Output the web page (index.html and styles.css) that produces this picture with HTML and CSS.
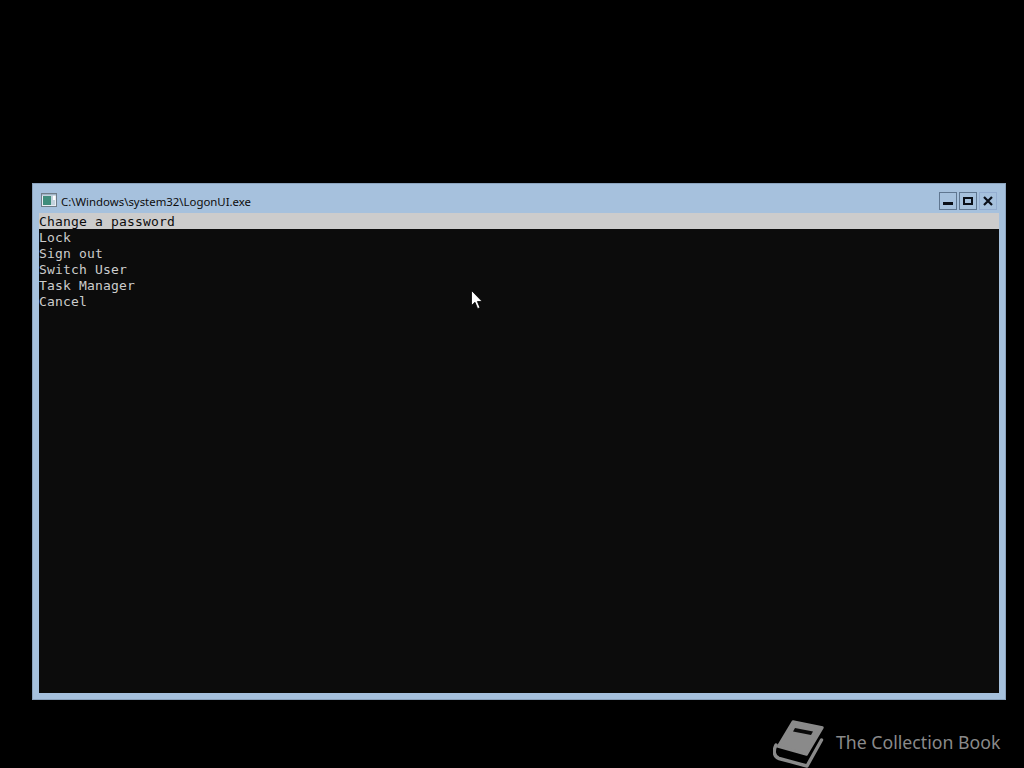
FILE: index.html
```html
<!DOCTYPE html>
<html lang="en">
<head>
<meta charset="utf-8">
<title>LogonUI</title>
<link rel="stylesheet" href="styles.css">
</head>
<body>
<main class="window">
  <header class="titlebar">
    <svg class="app-icon" width="16" height="14" viewBox="0 0 16 14">
      <rect x="0.5" y="0.5" width="15" height="13" fill="#e8eef4" stroke="#6f7c88"/>
      <rect x="2" y="3" width="8" height="9" fill="#3f8d7c"/>
      <rect x="10" y="3" width="4" height="9" fill="#c3d2de"/>
      <rect x="12" y="2" width="2" height="5" fill="#fff"/>
      <rect x="1" y="1" width="14" height="1.5" fill="#9fb4c6"/>
    </svg>
    <span class="title">C:\Windows\system32\LogonUI.exe</span>
    <div class="controls">
      <button class="ctl ctl-framed"><svg width="10" height="10" viewBox="0 0 10 10"><rect x="0" y="6" width="10" height="3" fill="#0a0f18"/></svg></button>
      <button class="ctl ctl-framed"><svg width="10" height="10" viewBox="0 0 10 10"><path d="M1 2h8v6H1z" fill="none" stroke="#0a0f18" stroke-width="2"/></svg></button>
      <button class="ctl"><svg width="10" height="10" viewBox="0 0 10 10"><path d="M1 1l8 8M9 1l-8 8" fill="none" stroke="#0a0f18" stroke-width="2.2"/></svg></button>
    </div>
  </header>
  <section class="console">
    <div class="line selected">Change a password</div>
    <div class="line">Lock</div>
    <div class="line">Sign out</div>
    <div class="line">Switch User</div>
    <div class="line">Task Manager</div>
    <div class="line">Cancel</div>
  </section>
</main>
<svg class="cursor" width="12" height="20" viewBox="0 0 12 20">
  <path d="M0.5 0.5V15.5L4 12.3L6.6 18.7L9 17.7L6.4 11.5H11.2Z" fill="#fff" stroke="#000" stroke-width="0.8"/>
</svg>
<footer class="watermark">
  <svg class="book" width="54" height="50" viewBox="0 0 54 50">
    <path d="M20 3.5 49.5 9.5 33.5 36.5 5 28.5Z" fill="#8a8a8a" stroke="#8a8a8a" stroke-width="2.5" stroke-linejoin="round"/>
    <path d="M22 10 40 13.5 38 17 20 13.5Z" fill="#0a0a0a"/>
    <path d="M3 27C0 33 1 39 6 40.5L34 48 48.5 22" fill="none" stroke="#8a8a8a" stroke-width="3.4" stroke-linecap="round" stroke-linejoin="round"/>
  </svg>
  <span class="brand">The Collection Book</span>
</footer>
</body>
</html>
```
FILE: styles.css
```css
html, body {
  margin: 0;
  height: 768px;
  background: #000;
  overflow: hidden;
}
body {
  padding: 183px 0 0 32px;
  box-sizing: border-box;
}
.window {
  width: 974px;
  height: 517px;
  box-sizing: border-box;
  background: #a6c1dd;
  padding: 0 7px 7px;
  display: flex;
  flex-direction: column;
  box-shadow: inset 0 0 0 1px #8ba3bd;
}
.titlebar {
  height: 30px;
  display: flex;
  align-items: center;
  flex: none;
}
.app-icon {
  margin: 4px 6px 0 2px;
  flex: none;
}
.title {
  font: 11.4px/16px "Noto Sans", "Open Sans", sans-serif;
  color: #0c0c0c;
  margin-top: 7px;
  margin-left: -2px;
}
.controls {
  margin-left: auto;
  display: flex;
  gap: 2px;
  margin-top: 6px;
  margin-right: 2px;
}
.ctl {
  width: 18px;
  height: 18px;
  padding: 0;
  border: 1px solid #94add0;
  background: #a6c1dd;
  display: flex;
  align-items: center;
  justify-content: center;
}
.ctl-framed {
  border-color: #5f7690;
}
.console {
  flex: 1;
  background: #0c0c0c;
  font: 13px/16px "DejaVu Sans Mono", monospace;
  letter-spacing: 0.17px;
  color: #cccccc;
}
.line {
  height: 16px;
  box-sizing: border-box;
  padding-top: 1px;
  white-space: pre;
  line-height: 15px;
}
.selected {
  background: #cccccc;
  color: #0c0c0c;
}
.cursor {
  position: absolute;
  left: 471px;
  top: 290px;
}
.watermark {
  position: absolute;
  left: 773px;
  top: 718px;
  display: flex;
  align-items: center;
  gap: 9px;
}
.book {
  flex: none;
}
.brand {
  font: 17.7px/24px "Noto Sans", "Open Sans", sans-serif;
  color: #8a8a8a;
  white-space: nowrap;
  margin-top: -2px;
}
```
